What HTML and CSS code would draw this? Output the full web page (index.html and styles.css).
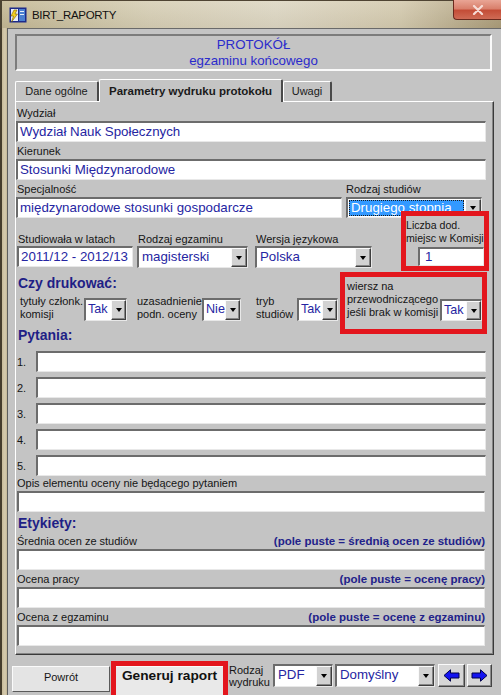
FILE: index.html
```html
<!DOCTYPE html>
<html lang="pl">
<head>
<meta charset="utf-8">
<title>BIRT_RAPORTY</title>
<link rel="stylesheet" href="styles.css">
</head>
<body>
<div class="window">
  <div class="titlebar">
    <svg class="app-icon" width="18" height="16" viewBox="0 0 18 16">
      <rect x="0.5" y="0.5" width="17" height="15" fill="#1d2a8a"/>
      <rect x="2" y="2" width="7" height="12" fill="#e8eef8"/>
      <rect x="10" y="2" width="6" height="12" fill="#4a7fd0"/>
      <rect x="11" y="4" width="4" height="1" fill="#e8eef8"/>
      <rect x="11" y="7" width="4" height="1" fill="#e8eef8"/>
      <path d="M5 3 L2 9 H4.5 L2.5 15 L8.5 7 H6 L8 3 Z" fill="#f4d020" stroke="#7a5c00" stroke-width="0.6"/>
    </svg>
    <span class="title">BIRT_RAPORTY</span>
    <div class="close">
      <svg width="12" height="10" viewBox="0 0 12 10">
        <path d="M2 1 L10 9 M10 1 L2 9" stroke="#f6dcd6" stroke-width="2.2" stroke-linecap="round"/>
      </svg>
    </div>
  </div>
  <div class="frame">
    <div class="frame-left"></div>
    <div class="client">
      <div class="header">
        <div>PROTOKÓŁ</div>
        <div>egzaminu końcowego</div>
      </div>
      <div class="tabs">
        <div class="tab t1">Dane ogólne</div>
        <div class="tab t2">Parametry wydruku protokołu</div>
        <div class="tab t3">Uwagi</div>
      </div>
      <div class="panel">
        <div class="lbl">Wydział</div>
        <div class="inp w-full">Wydział Nauk Społecznych</div>
        <div class="lbl">Kierunek</div>
        <div class="inp w-full">Stosunki Międzynarodowe</div>

        <div class="row">
          <div class="c-spec">
            <div class="lbl">Specjalność</div>
            <div class="inp">międzynarodowe stosunki gospodarcze</div>
          </div>
          <div class="c-rodz">
            <div class="lbl">Rodzaj studiów</div>
            <div class="sel sel-short"><div class="val"><span class="hl">Drugiego stopnia</span></div><div class="dd"></div></div>
          </div>
        </div>

        <div class="row r4">
          <div class="c-lat">
            <div class="lbl tall">Studiowała w latach</div>
            <div class="inp">2011/12 - 2012/13</div>
          </div>
          <div class="c-egz">
            <div class="lbl tall">Rodzaj egzaminu</div>
            <div class="sel"><div class="val">magisterski</div><div class="dd"></div></div>
          </div>
          <div class="c-wer">
            <div class="lbl tall">Wersja językowa</div>
            <div class="sel"><div class="val">Polska</div><div class="dd"></div></div>
          </div>
          <div class="redbox rb1">
            <div class="rb1-lbl">Liczba dod.<br>miejsc w Komisji</div>
            <div class="inp rb1-inp">1</div>
          </div>
        </div>

        <div class="row r5">
          <div class="left5">
            <div class="h">Czy drukować:</div>
            <div class="opts">
              <div class="olbl o1">tytuły członk.<br>komisji</div>
              <div class="sel small s1"><div class="val">Tak</div><div class="dd"></div></div>
              <div class="olbl o2">uzasadnienie<br>podn. oceny</div>
              <div class="sel small s2"><div class="val">Nie</div><div class="dd"></div></div>
              <div class="olbl o3">tryb<br>studiów</div>
              <div class="sel small s3"><div class="val">Tak</div><div class="dd"></div></div>
            </div>
          </div>
          <div class="redbox rb2">
            <div class="olbl o4">wiersz na<br>przewodniczącego<br>jeśli brak w komisji</div>
            <div class="sel small s4"><div class="val">Tak</div><div class="dd"></div></div>
          </div>
        </div>

        <div class="h h-pyt">Pytania:</div>
        <div class="qrow q-first"><div class="qn">1.</div><div class="inp q-inp"></div></div>
        <div class="qrow"><div class="qn">2.</div><div class="inp q-inp"></div></div>
        <div class="qrow"><div class="qn">3.</div><div class="inp q-inp"></div></div>
        <div class="qrow"><div class="qn">4.</div><div class="inp q-inp"></div></div>
        <div class="qrow"><div class="qn">5.</div><div class="inp q-inp"></div></div>

        <div class="lbl short">Opis elementu oceny nie będącego pytaniem</div>
        <div class="inp w-low"></div>

        <div class="h h-ety">Etykiety:</div>
        <div class="lblrow"><span>Średnia ocen ze studiów</span><span class="note">(pole puste = średnią ocen ze studiów)</span></div>
        <div class="inp w-low"></div>
        <div class="lblrow"><span>Ocena pracy</span><span class="note">(pole puste = ocenę pracy)</span></div>
        <div class="inp w-low"></div>
        <div class="lblrow"><span>Ocena z egzaminu</span><span class="note">(pole puste = ocenę z egzaminu)</span></div>
        <div class="inp w-low"></div>
      </div>

      <div class="bottom">
        <div class="btn-back">Powrót</div>
        <div class="redbox gen"><div class="gen-in">Generuj raport</div></div>
        <div class="rw">Rodzaj<br>wydruku</div>
        <div class="sel s-pdf"><div class="val">PDF</div><div class="dd"></div></div>
        <div class="sel s-dom"><div class="val">Domyślny</div><div class="dd"></div></div>
        <div class="arrow a-left">
          <svg width="17" height="13" viewBox="0 0 17 13"><path d="M1 6.5 L7.5 0.8 V4 H16 V9 H7.5 V12.2 Z" fill="#1414f0" stroke="#00004a" stroke-width="1" stroke-linejoin="round"/></svg>
        </div>
        <div class="arrow a-right">
          <svg width="17" height="13" viewBox="0 0 17 13"><path d="M16 6.5 L9.5 0.8 V4 H1 V9 H9.5 V12.2 Z" fill="#1414f0" stroke="#00004a" stroke-width="1" stroke-linejoin="round"/></svg>
        </div>
      </div>
    </div>
  </div>
</div>
</body>
</html>
```

FILE: styles.css
```css
* { box-sizing: border-box; }
html, body { margin: 0; padding: 0; }
body {
  width: 501px;
  height: 695px;
  overflow: hidden;
  font-family: "Liberation Sans", Arial, sans-serif;
  color: #151515;
  background: #c4c4c4;
}
.window { display: flex; flex-direction: column; height: 695px; }

/* title bar */
.titlebar {
  height: 28px;
  flex: none;
  display: flex;
  align-items: flex-start;
  border-top: 1px solid #4f4433;
  background:
    linear-gradient(to bottom, rgba(255,255,255,0.12), rgba(0,0,0,0.04)),
    linear-gradient(to right, #c3b793 0%, #d6ceb4 30%, #ddd6c2 55%, #d3c9ad 80%, #ab9c79 100%);
  box-shadow: inset 2px 0 0 #4a4231;
}
.app-icon { margin: 6px 0 0 9px; flex: none; }
.title {
  margin: 8px 0 0 5px;
  font-size: 11.5px;
  line-height: 13px;
  letter-spacing: -0.3px;
  color: #111;
}
.close {
  margin-left: auto;
  margin-top: -1px;
  width: 48px;
  height: 20px;
  display: flex;
  align-items: center;
  justify-content: center;
  background: linear-gradient(to bottom, #e9a595 0%, #d9806c 45%, #c44d37 55%, #cf6b55 100%);
  border-left: 1px solid #6a2a1e;
  border-bottom: 1px solid #6a2a1e;
  border-bottom-left-radius: 4px;
}

/* frame */
.frame { flex: 1; display: flex; min-height: 0; }
.frame-left {
  width: 8px;
  flex: none;
  background: linear-gradient(to right, #453c2c 0, #453c2c 2px, #c7ba99 2px, #d6cbaf 5px, #c3b694 7px, #5e5e5e 7px, #5e5e5e 8px);
}
.client {
  flex: 1;
  background: #c4c4c4;
  border-top: 1px solid #6a6a6a;
  padding: 5px 7px 0 7px;
  display: flex;
  flex-direction: column;
}

/* header */
.header {
  height: 38px;
  margin-right: 2px;
  border-style: solid;
  border-width: 2px;
  border-color: #7c7c7c #fafafa #fafafa #7c7c7c;
  text-align: center;
  color: #2b2bcc;
  font-size: 13.3px;
  line-height: 16px;
  padding-top: 1px;
}

/* tabs */
.tabs { display: flex; align-items: flex-end; height: 22px; margin-top: 8px; flex: none; }
.tab {
  height: 20px;
  border-top: 1px solid #fff;
  border-left: 1px solid #fff;
  border-right: 2px solid #4a4a4a;
  border-radius: 2px 2px 0 0;
  font-size: 11px;
  line-height: 13px;
  display: flex;
  align-items: flex-end;
  justify-content: center;
  padding-bottom: 3px;
  color: #1a1a1a;
  background: #c4c4c4;
}
.t1 { width: 84px; }
.t2 {
  width: 184px;
  height: 23px;
  margin-bottom: -1px;
  font-weight: bold;
  font-size: 11.5px;
  padding-bottom: 4px;
  position: relative;
  z-index: 1;
}
.t3 { width: 49px; }

/* panel */
.panel {
  height: 554px;
  flex: none;
  border-top: 1px solid #fff;
  border-left: 1px solid #fff;
  border-right: 1px solid #3a3a3a;
  border-bottom: 1px solid #3a3a3a;
  box-shadow: inset -1px -1px 0 #858585;
  padding: 2px 0 0 0;
}
.lbl {
  font-size: 11px;
  line-height: 13px;
  height: 17px;
  display: flex;
  align-items: flex-end;
  padding: 0 0 1px 1px;
  white-space: nowrap;
}
.lbl.tall { height: 28px; padding-bottom: 0; }
.lbl.short { height: 15px; }

.inp {
  height: 21px;
  background: #fff;
  border-style: solid;
  border-width: 2px 1px 1px 2px;
  border-color: #6c6c6c #e8e8e8 #e8e8e8 #6c6c6c;
  font-size: 13.3px;
  line-height: 17px;
  color: #2525a2;
  padding-left: 2px;
  white-space: nowrap;
  overflow: hidden;
}
.w-full { width: 470px; }
.w-low { width: 468px; margin-left: 1px; }

.row { display: flex; align-items: flex-start; }
.c-spec { width: 326px; }
.c-rodz { width: 136px; margin-left: 4px; }
.c-rodz .lbl { padding-left: 0; }

/* select */
.sel {
  height: 22px;
  display: flex;
  background: #fff;
  border-style: solid;
  border-width: 2px 1px 1px 2px;
  border-color: #6c6c6c #e8e8e8 #e8e8e8 #6c6c6c;
  flex: none;
}
.sel .val {
  flex: 1;
  min-width: 0;
  font-size: 13.3px;
  line-height: 18px;
  color: #2525a2;
  padding-left: 3px;
  white-space: nowrap;
  overflow: hidden;
}
.sel .dd {
  width: 16px;
  flex: none;
  background: #d2d2d2;
  border: 1px solid;
  border-color: #fafafa #3e3e3e #3e3e3e #fafafa;
  box-shadow: inset -1px -1px 0 #868686;
  display: flex;
  align-items: center;
  justify-content: center;
}
.sel .dd::after {
  content: "";
  border-left: 3.5px solid transparent;
  border-right: 3.5px solid transparent;
  border-top: 4px solid #000;
}
.sel.small .val { font-size: 12.6px; padding-left: 2px; line-height: 19px; }
.sel.small .dd { width: 15px; }
.sel-short { height: 21px; }
.sel-short .val { padding: 1px 1px 0 1px; }
.hl {
  display: block;
  height: 16px;
  background: #3399ff;
  color: #fff;
  border: 1px dotted #1a1a1a;
  line-height: 14px;
  padding-left: 1px;
}

/* row 4 */
.c-lat { width: 116px; margin-left: 1px; }
.c-egz { width: 111px; margin-left: 4px; }
.c-wer { width: 117px; margin-left: 7px; }
.c-lat .inp, .c-egz .sel, .c-wer .sel { width: 100%; }

.redbox { border: 5px solid #e3161d; background: #c4c4c4; position: relative; z-index: 2; }
.rb1 {
  width: 88px;
  height: 60px;
  margin-left: 29px;
  margin-top: -7px;
  padding-top: 3px;
}
.rb1-lbl {
  font-size: 10.6px;
  line-height: 12.5px;
  white-space: nowrap;
}
.rb1-inp {
  margin: 3px 0 0 12px;
  width: 66px;
  height: 19px;
  padding-left: 5px;
  line-height: 16px;
}

/* row 5 */
.h {
  font-size: 14px;
  font-weight: bold;
  color: #1f1f86;
  line-height: 17px;
  height: 17px;
  padding-left: 2px;
  white-space: nowrap;
}
.left5 { width: 324px; }
.left5 .h { margin-top: 4px; }
.opts { display: flex; align-items: flex-start; margin-top: 6px; height: 23px; }
.olbl {
  font-size: 11px;
  line-height: 13px;
  white-space: nowrap;
  margin-top: -3px;
  flex: none;
}
.opts .sel { height: 23px; }
.o1 { width: 68px; padding-left: 4px; }
.s1 { width: 43px; }
.o2 { width: 65px; margin-left: 10px; }
.s2 { width: 39px; }
.o3 { width: 41px; margin-left: 15px; }
.s3 { width: 41px; }

.rb2 {
  width: 147px;
  height: 62px;
  margin-top: 1px;
  margin-bottom: -13px;
  display: flex;
  align-items: flex-end;
  padding: 0 0 8px 2px;
}
.o4 { width: 93px; margin: 0 0 2px 0; }
.s4 { width: 42px; }

/* questions */
.h-pyt { margin-top: 6px; }
.qrow { display: flex; align-items: flex-start; margin-top: 5px; }
.q-first { margin-top: 7px; }
.qn { width: 20px; padding: 5px 0 0 1px; font-size: 11px; line-height: 13px; }
.q-inp { width: 450px; }

.h-ety { margin-top: 3px; }
.lblrow {
  width: 469px;
  height: 17px;
  display: flex;
  justify-content: space-between;
  align-items: flex-end;
  padding: 0 0 1px 1px;
  font-size: 11px;
  line-height: 13px;
  white-space: nowrap;
}
.note { font-weight: bold; font-size: 11.5px; color: #22228a; }

/* bottom bar */
.bottom { display: flex; align-items: flex-start; margin: 6px 0 0 -3px; }
.btn-back {
  width: 98px;
  height: 26px;
  margin-top: 5px;
  background: #e4e4e4;
  border: 1px solid;
  border-color: #fbfbfb #5a5a5a #5a5a5a #fbfbfb;
  font-size: 11px;
  line-height: 13px;
  display: flex;
  align-items: center;
  justify-content: center;
  padding-bottom: 3px;
}
.gen {
  width: 117px;
  height: 40px;
  margin-left: 1px;
  flex: none;
}
.gen-in {
  height: 100%;
  background: #e9e9e9;
  border-top: 1px solid #fafafa;
  font-size: 13.7px;
  font-weight: bold;
  line-height: 16px;
  text-align: center;
  padding-top: 1px;
  color: #111;
  white-space: nowrap;
}
.rw {
  width: 42px;
  margin: 3px 0 0 1px;
  font-size: 11px;
  line-height: 12px;
  white-space: nowrap;
  flex: none;
}
.s-pdf { width: 60px; height: 23px; margin: 3px 0 0 2px; }
.s-dom { width: 100px; height: 23px; margin: 3px 0 0 2px; }
.arrow {
  width: 27px;
  height: 23px;
  margin: 3px 0 0 3px;
  background: #d6d6d6;
  border: 1px solid;
  border-color: #fbfbfb #444 #444 #fbfbfb;
  box-shadow: inset -1px -1px 0 #8a8a8a;
  display: flex;
  align-items: center;
  justify-content: center;
  flex: none;
}
.a-right { width: 25px; margin-left: 2px; }
```
